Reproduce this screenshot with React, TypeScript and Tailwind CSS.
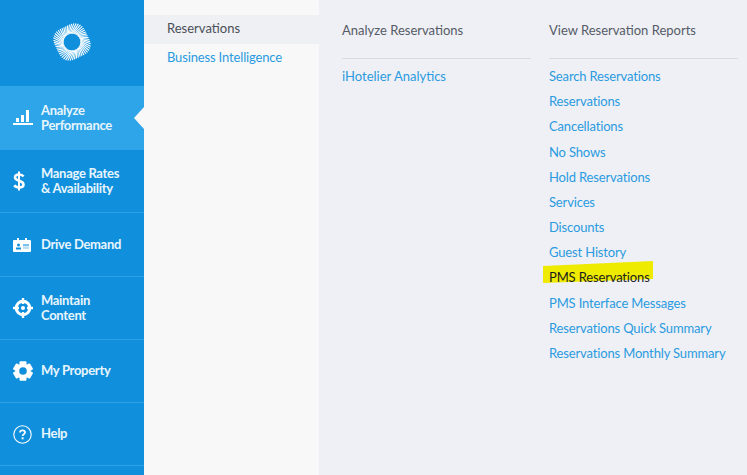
const reportLinks = [
  "Search Reservations",
  "Reservations",
  "Cancellations",
  "No Shows",
  "Hold Reservations",
  "Services",
  "Discounts",
  "Guest History",
  "PMS Reservations",
  "PMS Interface Messages",
  "Reservations Quick Summary",
  "Reservations Monthly Summary",
];

function Logo() {
  const rays = Array.from({ length: 52 }, (_, i) => (i * 360) / 52);
  return (
    <svg width="40" height="40" viewBox="0 0 40 40" aria-hidden="true">
      {rays.map((a) => {
        const rad = (a * Math.PI) / 180;
        const outer = 18 + 1.2 * Math.cos(4 * rad);
        return (
          <line
            key={a}
            x1="20"
            y1={20 - 8.4}
            x2={20 + outer * Math.sin(0.34)}
            y2={20 - outer * Math.cos(0.34)}
            stroke="#fff"
            strokeWidth="1.1"
            transform={`rotate(${a} 20 20)`}
          />
        );
      })}
    </svg>
  );
}

function ChartIcon() {
  return (
    <svg width="20" height="18" viewBox="0 0 20 18" fill="#fff" aria-hidden="true">
      <rect x="0" y="14" width="20" height="2" />
      <rect x="3" y="9" width="3" height="4" />
      <rect x="8" y="6" width="3" height="7" />
      <rect x="13" y="1" width="3" height="12" />
    </svg>
  );
}

function DollarIcon() {
  return (
    <svg width="12" height="20" viewBox="0 0 12 20" fill="none" stroke="#fff" strokeWidth="2.6" aria-hidden="true">
      <path d="M10.5 5.5C9.5 4 8 3.5 6 3.5 3.5 3.5 2 4.7 2 6.4c0 4 8.5 2.5 8.5 7 0 1.9-1.8 3-4.5 3-2.2 0-3.8-.8-4.7-2.2" />
      <path d="M6 0.5v19" strokeWidth="2" />
    </svg>
  );
}

function CardIcon() {
  return (
    <svg width="18" height="14" viewBox="0 0 18 14" fill="#fff" aria-hidden="true">
      <path d="M1 2h3V0h2v2h6V0h2v2h3a1 1 0 0 1 1 1v10a1 1 0 0 1-1 1H1a1 1 0 0 1-1-1V3a1 1 0 0 1 1-1z" />
      <circle cx="5.5" cy="7" r="1.5" fill="#1090dc" />
      <rect x="3" y="9.5" width="5" height="2" fill="#1090dc" />
      <rect x="10" y="6" width="6" height="2.4" fill="#7cc2ec" />
      <rect x="10" y="9.5" width="6" height="1" fill="#7cc2ec" />
    </svg>
  );
}

function TargetIcon() {
  return (
    <svg width="20" height="20" viewBox="0 0 20 20" fill="none" stroke="#fff" aria-hidden="true">
      <circle cx="10" cy="10" r="6.8" strokeWidth="3" />
      <circle cx="10" cy="10" r="2" fill="#fff" stroke="none" />
      <path d="M10 0v6M10 14v6M0 10h6M14 10h6" strokeWidth="2.4" />
    </svg>
  );
}

function GearIcon() {
  const teeth = [0, 60, 120, 180, 240, 300];
  return (
    <svg width="20" height="20" viewBox="0 0 20 20" aria-hidden="true">
      {teeth.map((a) => (
        <rect key={a} x="6.5" y="0.2" width="7" height="5" rx="1" fill="#fff" transform={`rotate(${a} 10 10)`} />
      ))}
      <circle cx="10" cy="10" r="5.6" fill="none" stroke="#fff" strokeWidth="3.6" />
    </svg>
  );
}

function HelpIcon() {
  return (
    <svg width="19" height="19" viewBox="0 0 19 19" fill="none" aria-hidden="true">
      <circle cx="9.5" cy="9.5" r="8.7" stroke="#fff" strokeWidth="1.1" />
      <path d="M7 7.6c0-1.5 1.1-2.3 2.5-2.3s2.5.8 2.5 2.1c0 1.8-2.4 1.8-2.4 3.6" stroke="#fff" strokeWidth="1.7" />
      <rect x="8.6" y="12.3" width="2" height="2" fill="#fff" />
    </svg>
  );
}

interface NavItemProps {
  icon: React.ReactNode;
  label: React.ReactNode;
  className: string;
  labelClassName?: string;
  active?: boolean;
}

function NavItem({ icon, label, className, labelClassName, active }: NavItemProps) {
  return (
    <div className={`relative flex items-center shrink-0 ${className}`}>
      <div className="w-[41px] pl-[13px] flex items-center justify-start shrink-0">{icon}</div>
      <div className={`text-[13px] leading-[15px] font-bold tracking-[-0.3px] text-[#e8f5fd] whitespace-nowrap ${labelClassName ?? ""}`}>{label}</div>
      {active && (
        <div className="absolute right-0 top-1/2 -translate-y-1/2 w-0 h-0 border-y-[11px] border-y-transparent border-r-[10px] border-r-[#f8f8f8]" />
      )}
    </div>
  );
}

export default function App() {
  return (
    <div className="relative flex w-[747px] h-[475px] overflow-hidden bg-[#eff0f5] font-['Lato','Liberation_Sans',sans-serif]">
      <div className="w-[144px] shrink-0 flex flex-col bg-[#1090dc]">
        <div className="h-[86px] flex items-center justify-center shrink-0 pb-[2px]">
          <Logo />
        </div>
        <NavItem className="h-[64px] bg-[#2ea5e8]" active icon={<ChartIcon />} label={<>Analyze<br />Performance</>} />
        <NavItem className="h-[63px] border-b border-[#2ea0e4]" icon={<DollarIcon />} label={<>Manage Rates<br />&amp; Availability</>} />
        <NavItem className="h-[64px] border-b border-[#2ea0e4]" icon={<CardIcon />} label="Drive Demand" />
        <NavItem className="h-[63px] border-b border-[#2ea0e4]" icon={<TargetIcon />} label={<>Maintain<br />Content</>} />
        <NavItem className="h-[63px] border-b border-[#2ea0e4]" icon={<GearIcon />} label="My Property" labelClassName="pb-[2px]" />
        <NavItem className="h-[63px] border-b border-[#2ea0e4]" icon={<HelpIcon />} label="Help" labelClassName="pb-[2px]" />
      </div>

      <div className="w-[175px] shrink-0 bg-[#f8f8f8] pt-[15px] text-[13px]">
        <div className="h-[29px] flex items-center pl-[23px] pb-[1px] bg-[#eff0f4] text-[#4a4f57]">Reservations</div>
        <div className="h-[29px] flex items-center pl-[23px] pb-[1px] tracking-[-0.15px] text-[#2a9be0]">Business Intelligence</div>
      </div>

      <div className="flex gap-[18px] pl-[23px] text-[13px]">
        <div className="w-[189px]">
          <div className="h-[59px] pt-[21px] leading-[18px] border-b border-[#d8dbe2] text-[#555b66]">Analyze Reservations</div>
          <div className="mt-[8px] leading-[18px] text-[#2a9be0]">iHotelier Analytics</div>
        </div>
        <div className="w-[189px]">
          <div className="h-[59px] pt-[21px] leading-[18px] border-b border-[#d8dbe2] text-[#555b66]">View Reservation Reports</div>
          <div className="mt-[8px] flex flex-col gap-[7.2px] tracking-[-0.15px]">
            {reportLinks.map((link) => (
              <div
                key={link}
                className={`relative leading-[18px] whitespace-nowrap ${link === "PMS Reservations" ? "text-[#1c1c1c]" : "text-[#2a9be0]"}`}
              >
                {link === "PMS Reservations" && (
                  <svg className="absolute left-[-6px] top-[-8px]" width="111" height="23" viewBox="0 0 111 23" aria-hidden="true">
                    <path d="M0 5 110 0V18L0 22Z" fill="#eeea00" />
                  </svg>
                )}
                <span className={link === "PMS Reservations" ? "relative -top-px" : "relative"}>{link}</span>
              </div>
            ))}
          </div>
        </div>
      </div>
    </div>
  );
}
